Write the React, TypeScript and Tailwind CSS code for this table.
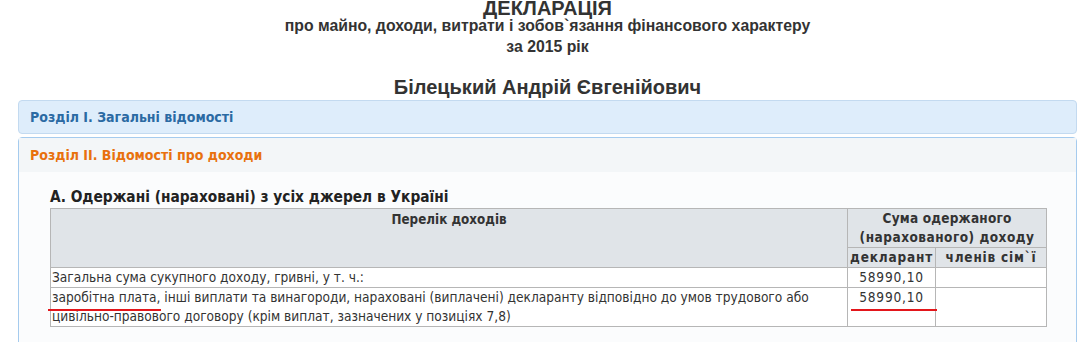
import React from "react";

const condensed = {
  fontFamily: '"DejaVu Sans Condensed", "DejaVu Sans", sans-serif',
  fontStretch: "condensed" as const,
};

export default function App() {
  return (
    <div className="w-[1081px] h-[342px] overflow-hidden bg-white text-[#333]" style={{ fontFamily: '"Liberation Sans", Arial, sans-serif' }}>
      <div className="mx-[18px] w-[1059px]">
        <div className="text-center font-bold">
          <div className="text-[20px] leading-[16px]">ДЕКЛАРАЦІЯ</div>
          <div className="text-[15.8px] leading-[16px] mt-[2px]">про майно, доходи, витрати і зобов`язання фінансового характеру</div>
          <div className="text-[15.8px] leading-[16px] mt-[5px]">за 2015 рік</div>
          <div className="text-[20px] leading-[24px] mt-[20px]">Білецький Андрій Євгенійович</div>
        </div>

        <div className="mt-[1px] h-[34px] rounded-[4px] border border-[#c3daf0] bg-[#deedfb] flex items-center pl-[11px]">
          <span className="text-[14px] font-bold text-[#2b6aa3]" style={condensed}>Розділ I. Загальні відомості</span>
        </div>

        <div className="mt-[3px] h-[240px] rounded-t-[4px] border border-[#a5cbee] bg-[#fbfcfd]">
          <div className="h-[34px] bg-[#f3f6f8] flex items-center pl-[11px]">
            <span className="text-[14px] font-bold text-[#e8710e]" style={condensed}>Розділ II. Відомості про доходи</span>
          </div>
          <div className="pl-[31px] pt-[15px]">
            <div className="text-[15.3px] font-bold leading-[21px] text-[#222]" style={condensed}>А. Одержані (нараховані) з усіх джерел в Україні</div>
            <table className="border-collapse text-[13.6px] text-[#333] w-[997px]" style={condensed}>
              <colgroup>
                <col className="w-[798px]" />
                <col className="w-[88px]" />
                <col className="w-[111px]" />
              </colgroup>
              <thead>
                <tr className="bg-[#e0e4e8]">
                  <th rowSpan={2} className="border border-[#b6b6b6] align-top font-bold text-center text-[13.3px] leading-[19px] pt-[1px]">Перелік доходів</th>
                  <th colSpan={2} className="border border-[#b6b6b6] font-bold text-center text-[13.5px] leading-[19px] h-[39px]">
                    <span className="tracking-[0.2px]">Сума одержаного</span>
                    <br />
                    <span className="tracking-[0.5px]">(нарахованого) доходу</span>
                  </th>
                </tr>
                <tr className="bg-[#e0e4e8]">
                  <th className="border border-[#b6b6b6] font-bold text-center text-[13.5px] tracking-[0.8px] leading-[19px] h-[20px]">декларант</th>
                  <th className="border border-[#b6b6b6] font-bold text-center text-[13.5px] tracking-[0.8px] leading-[19px]">членів сім`ї</th>
                </tr>
              </thead>
              <tbody className="bg-white">
                <tr>
                  <td className="border border-[#b6b6b6] px-[1px] leading-[19px] h-[20px] align-top">Загальна сума сукупного доходу, гривні, у т. ч.:</td>
                  <td className="border border-[#b6b6b6] text-center leading-[19px] align-top tracking-[0.8px]">58990,10</td>
                  <td className="border border-[#b6b6b6]"></td>
                </tr>
                <tr>
                  <td className="border border-[#b6b6b6] px-[1px] leading-[19px] align-top relative">
                    заробітна плата, інші виплати та винагороди, нараховані (виплачені) декларанту відповідно до умов трудового або<br />
                    цивільно-правового договору (крім виплат, зазначених у позиціях 7,8)
                    <span className="absolute left-[-3px] top-[21px] w-[113px] h-[2px] bg-[#e3161b]"></span>
                  </td>
                  <td className="border border-[#b6b6b6] text-center leading-[19px] align-top relative tracking-[0.8px]">
                    58990,10
                    <span className="absolute left-[3px] top-[21px] w-[86px] h-[2px] bg-[#e3161b]"></span>
                  </td>
                  <td className="border border-[#b6b6b6]"></td>
                </tr>
              </tbody>
            </table>
          </div>
        </div>
      </div>
    </div>
  );
}
